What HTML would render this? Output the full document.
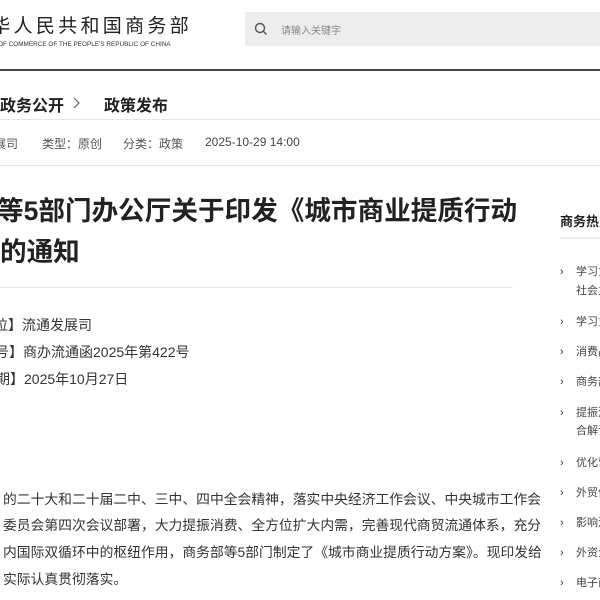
<!DOCTYPE html>
<html><head><meta charset="utf-8"><style>
body{margin:0;width:600px;height:600px;overflow:hidden;background:#fff;position:relative;font-family:"Liberation Sans","Noto Sans CJK SC",sans-serif;color:#333}
.a{position:absolute;white-space:nowrap}
.hr{position:absolute;height:1px;background:#e6e6e6}
.si{position:absolute;left:560px;font-size:11px;color:#444;white-space:nowrap}
.si b{font-weight:normal;display:inline-block;width:16px;color:#333}
</style></head><body>
<div class="a" style="left:-31px;top:11px;font-size:19px;letter-spacing:3.3px;color:#222">中华人民共和国商务部</div>
<div class="a" style="left:-2px;top:41px;font-size:6.4px;color:#333">OF COMMERCE OF THE PEOPLE'S REPUBLIC OF CHINA</div>
<div style="position:absolute;left:245px;top:12px;width:360px;height:34px;background:#ededed"></div>
<svg style="position:absolute;left:254px;top:22px" width="14" height="14" viewBox="0 0 14 14"><circle cx="6" cy="6" r="4.5" fill="none" stroke="#555" stroke-width="1.4"/><line x1="9.3" y1="9.3" x2="12.5" y2="12.5" stroke="#555" stroke-width="1.4"/></svg>
<div class="a" style="left:281px;top:22px;font-size:10px;color:#888">请输入关键字</div>
<div style="position:absolute;left:0;top:69px;width:600px;height:2px;background:#444"></div>
<div class="a" style="left:0;top:92px;font-size:16px;font-weight:bold;color:#222">政务公开</div>
<svg style="position:absolute;left:73px;top:97px" width="8" height="12" viewBox="0 0 8 12"><path d="M1 1 L6 6 L1 11" fill="none" stroke="#666" stroke-width="1.2"/></svg>
<div class="a" style="left:104px;top:92px;font-size:16px;font-weight:bold;color:#222">政策发布</div>
<div class="hr" style="left:0;top:119px;width:600px"></div>
<div class="a" style="left:-6px;top:135px;font-size:12px;color:#555">展司</div>
<div class="a" style="left:42px;top:135px;font-size:12px;color:#555">类型：原创</div>
<div class="a" style="left:123px;top:135px;font-size:12px;color:#555">分类：政策</div>
<div class="a" style="left:205px;top:135px;font-size:12px;color:#444">2025-10-29 14:00</div>
<div class="hr" style="left:0;top:165px;width:600px"></div>
<div class="a" style="left:-3px;top:189px;font-size:26.6px;font-weight:bold;color:#222">等5部门办公厅关于印发《城市商业提质行动</div>
<div class="a" style="left:0;top:230px;font-size:26.6px;font-weight:bold;color:#222">的通知</div>
<div class="hr" style="left:0;top:287px;width:513px"></div>
<div class="a" style="left:-6px;top:315px;font-size:14px;color:#333">位】流通发展司</div>
<div class="a" style="left:-5px;top:342px;font-size:14px;color:#333">号】商办流通函2025年第422号</div>
<div class="a" style="left:-4px;top:369px;font-size:14px;color:#333">期】2025年10月27日</div>
<div class="a" style="left:3px;top:488px;font-size:13.8px;color:#333">的二十大和二十届二中、三中、四中全会精神，落实中央经济工作会议、中央城市工作会</div>
<div class="a" style="left:3px;top:514px;font-size:13.8px;color:#333">委员会第四次会议部署，大力提振消费、全方位扩大内需，完善现代商贸流通体系，充分</div>
<div class="a" style="left:3px;top:541px;font-size:13.8px;color:#333">内国际双循环中的枢纽作用，商务部等5部门制定了《城市商业提质行动方案》。现印发给</div>
<div class="a" style="left:3px;top:568px;font-size:13.8px;color:#333">实际认真贯彻落实。</div>
<div class="a" style="left:560px;top:211px;font-size:13px;font-weight:bold;color:#222">商务热点</div>
<div class="hr" style="left:560px;top:237px;width:40px;height:2px;background:#eee"></div>
<div class="si" style="top:263px"><b>›</b>学习贯彻</div>
<div class="si" style="top:282px"><b></b>社会主义</div>
<div class="si" style="top:313px"><b>›</b>学习贯彻</div>
<div class="si" style="top:343px"><b>›</b>消费品以</div>
<div class="si" style="top:373px"><b>›</b>商务部</div>
<div class="si" style="top:404px"><b>›</b>提振消费</div>
<div class="si" style="top:422px"><b></b>合解读</div>
<div class="si" style="top:454px"><b>›</b>优化营商</div>
<div class="si" style="top:484px"><b>›</b>外贸优化</div>
<div class="si" style="top:514px"><b>›</b>影响消费</div>
<div class="si" style="top:544px"><b>›</b>外资企业</div>
<div class="si" style="top:574px"><b>›</b>电子商务</div>
</body></html>
